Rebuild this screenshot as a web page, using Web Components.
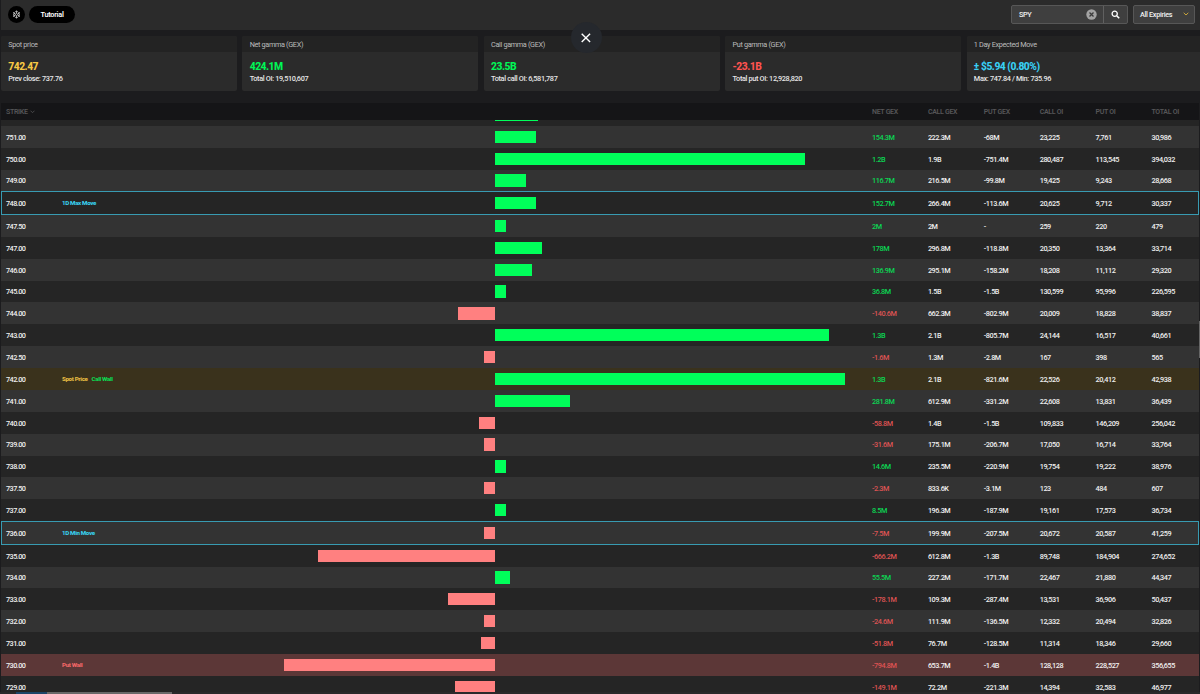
<!DOCTYPE html>
<html lang="en">
<head>
<meta charset="UTF-8">
<meta name="viewport" content="width=device-width, initial-scale=1.0">
<title>Gamma exposure</title>
<style>
    body { margin: 0; width: 1200px; height: 694px; overflow: hidden; background: #1c1c1e; color: #f0f0f0; font: 500 7.3px Roboto, "Liberation Sans", sans-serif; letter-spacing: -0.43px; }
</style>
</head>
<body>
<gex-app></gex-app>

<template id="app-template">
    <style>
        :host { display: flex; flex-direction: column; width: 1200px; height: 694px; overflow: hidden; position: relative; }
        .cards { display: flex; gap: 5.6px; padding: 5.7px 0 0 1px; height: 55.3px; width: 1201px; }
        stat-card { flex: none; width: 235.8px; }
        gex-table { margin-top: 12px; }
        .close { position: absolute; left: 570.5px; top: 22px; width: 31px; height: 31px; border-radius: 50%; background: #25282d; display: flex; align-items: center; justify-content: center; }
        .foot { position: absolute; left: 0; right: 0; bottom: 0; height: 2px; display: flex; background: #29292a; }
        .foot i { height: 2px; }
        .thumb { position: absolute; right: 0; top: 321px; width: 1.3px; height: 37px; background: #666; }
    </style>
    <top-bar></top-bar>
    <div class="cards">
        <stat-card label="Spot price" color="#f6c744">742.47<span slot="note">Prev close: 737.76</span></stat-card>
        <stat-card label="Net gamma (GEX)" color="#00f556">424.1M<span slot="note">Total OI: 19,510,607</span></stat-card>
        <stat-card label="Call gamma (GEX)" color="#00f556">23.5B<span slot="note">Total call OI: 6,581,787</span></stat-card>
        <stat-card label="Put gamma (GEX)" color="#ff5350">-23.1B<span slot="note">Total put OI: 12,928,820</span></stat-card>
        <stat-card label="1 Day Expected Move" color="#38d0f5">± $5.94 (0.80%)<span slot="note">Max: 747.84 / Min: 735.96</span></stat-card>
    </div>
    <gex-table></gex-table>
    <div class="close"><svg width="10" height="10" viewBox="0 0 10 10"><path d="M.7.7l8.400 8.400M9.100.7L.7 9.100" stroke="#fff" stroke-width="1.4"/></svg></div>
    <div class="foot"><i style="width:16px"></i><i style="width:31px;background:#1c4568"></i><i style="width:125px;background:#686868"></i></div>
    <div class="thumb"></div>
</template>

<template id="bar-template">
    <style>
        :host { display: flex; align-items: center; box-sizing: border-box; width: 1199px; height: 30px; margin-left: 1px; padding: 0 5px 1.5px 7px; background: #2b2b2b; flex: none; }
        .round { width: 17px; height: 17px; border-radius: 50%; background: #000; display: flex; align-items: center; justify-content: center; }
        .pill { width: 46px; height: 17px; margin-left: 4px; border-radius: 9px; background: #000; color: #fff; font-weight: 600; letter-spacing: -.25px; line-height: 18px; text-align: center; }
        .search { display: flex; margin-left: auto; width: 117px; height: 19.5px; box-sizing: border-box; border: 1px solid #575757; border-radius: 2px; background: #3f3f3f; align-items: center; }
        .search span { flex: 1; padding-left: 7.5px; }
        .search button { all: unset; display: flex; align-items: center; justify-content: center; width: 23px; height: 100%; border-left: 1px solid #606060; margin-left: 6px; }
        .select { display: flex; align-items: center; justify-content: space-between; margin-left: 5.5px; width: 62px; height: 19.5px; box-sizing: border-box; padding: 0 5px 0 6px; border: 1px solid #575757; border-radius: 2px; background: #3f3f3f; letter-spacing: -.33px; }
    </style>
    <div class="round"><svg width="9" height="9" viewBox="0 0 18 18" fill="none" stroke="#ddd" stroke-width="1.4"><circle cx="9" cy="9" r="2"/><path d="M9 1v5M9 12v5M2 5l4.5 2.5M11.5 10.5L16 13M2 13l4.5-2.5M11.5 7.5L16 5M6.5 2L9 4.5 11.500 2M6.500 16L9 13.500 11.500 16M2 8.500L5 8 4 4M16 8.500L13 8l1-4M2 10l3 .5L4 14M16 10l-3 .5 1 3.500"/></svg></div>
    <div class="pill">Tutorial</div>
    <div class="search"><span>SPY</span>
        <svg width="11" height="11" viewBox="0 0 11 11"><circle cx="5.500" cy="5.500" r="5.200" fill="#a3a3a3"/><path d="M3.500 3.500l4 4M7.500 3.500l-4 4" stroke="#3c3c3c" stroke-width="1.300"/></svg>
        <button><svg width="9" height="9" viewBox="0 0 9 9" fill="none" stroke="#fff"><circle cx="3.700" cy="3.700" r="2.600" stroke-width="1.300"/><path d="M5.700 5.700l2.500 2.500" stroke-width="1.600"/></svg></button>
    </div>
    <div class="select"><span>All Expiries</span><svg width="6" height="4" viewBox="0 0 6 4"><path d="M.7.8l2.300 2.200L5.300.8" fill="none" stroke="#c9a53c" stroke-width="1"/></svg></div>
</template>

<template id="card-template">
    <style>
        :host { display: flex; flex-direction: column; height: 55.300px; border-radius: 2px; overflow: hidden; background: #2b2b2b; }
        .label { height: 16.300px; line-height: 17.400px; padding-left: 7.300px; background: #232323; color: #bcbcbc; font-weight: 400; letter-spacing: -.35px; flex: none; }
        .value { padding: 8px 0 0 7.300px; font-size: 10.300px; font-weight: 800; line-height: 13px; letter-spacing: -.5px; color: var(--value); }
        .note { padding-left: 7.300px; line-height: 11.500px; letter-spacing: -.34px; color: #e6e6e6; }
    </style>
    <div class="label"></div>
    <div class="value"><slot></slot></div>
    <div class="note"><slot name="note"></slot></div>
</template>

<template id="table-template">
    <style>
        :host { display: flex; flex-direction: column; width: 1198px; margin-left: 1px; flex: none; }
        .head { display: grid; grid-template-columns: 56px 83px 700px 27px repeat(5, 55.900px) 1fr; padding: 1.500px 0 0 5px; align-items: center; box-sizing: border-box; height: 17px; background: #151517; color: #555557; font-weight: 600; font-size: 7px; letter-spacing: -.3px; }
        .head svg { margin-left: 1px; }
        .sliver { height: 5.900px; background: #252525; padding-left: 494px; }
        .sliver i { display: block; width: 42.500px; height: 1.300px; background: #00ff5a; }
    </style>
    <div class="head"><span>STRIKE <svg width="5" height="4" viewBox="0 0 5 4"><path d="M.5.7l2 2 2-2" fill="none" stroke="#555557" stroke-width=".8"/></svg></span><span></span><span></span><span></span><span>NET GEX</span><span>CALL GEX</span><span>PUT GEX</span><span>CALL OI</span><span>PUT OI</span><span>TOTAL OI</span></div>
    <div class="sliver"><i></i></div>
    <div class="rows"></div>
</template>

<template id="row-template">
    <style>
        :host { display: grid; grid-template-columns: 56px 83px 700px 27px repeat(5, 55.900px) 1fr; align-items: center; box-sizing: border-box; height: 21.860px; padding-left: 5px; background: #252525; }
        :host([light]) { background: #333; }
        :host([mark=move]) { height: 23.600px; border: 1px solid #389bb2; padding-left: 4px; }
        :host([mark=spot]) { background: #3a321c; }
        :host([mark=put]) { background: #5c3737; }
        span { padding-top: .8px; }
        .strike { letter-spacing: -.55px; }
        .tags { display: flex; gap: 4px; font-size: 6.200px; font-weight: 800; letter-spacing: -.35px; }
        .tags span { padding: 0; }
        .chart { display: flex; height: 12.200px; }
        .chart i { display: block; background: #00ff5a; margin-left: 350px; }
        .chart i.neg { background: #ff8080; }
        .net { color: #0bd653; }
        .net.neg { color: #df5353; }
    </style>
    <span class="strike"></span>
    <div class="tags"></div>
    <div class="chart"><i></i></div>
    <span></span>
    <span class="net"></span>
</template>

<script>
    // strike, bar width (negative grows to the left), net gex, call gex, put gex, call oi, put oi, total oi
    const rows = [
        ['751.00', 41, '154.3M', '222.3M', '-68M', '23,225', '7,761', '30,986'],
        ['750.00', 309.5, '1.2B', '1.9B', '-751.4M', '280,487', '113,545', '394,032'],
        ['749.00', 30.5, '116.7M', '216.5M', '-99.8M', '19,425', '9,243', '28,668'],
        ['748.00', 40.5, '152.7M', '266.4M', '-113.6M', '20,625', '9,712', '30,337'],
        ['747.50', 10.5, '2M', '2M', '-', '259', '220', '479'],
        ['747.00', 47, '178M', '296.8M', '-118.8M', '20,350', '13,364', '33,714'],
        ['746.00', 36.5, '136.9M', '295.1M', '-158.2M', '18,208', '11,112', '29,320'],
        ['745.00', 10.5, '36.8M', '1.5B', '-1.5B', '130,599', '95,996', '226,595'],
        ['744.00', -37.5, '-140.6M', '662.3M', '-802.9M', '20,009', '18,828', '38,837'],
        ['743.00', 334, '1.3B', '2.1B', '-805.7M', '24,144', '16,517', '40,661'],
        ['742.50', -11, '-1.6M', '1.3M', '-2.8M', '167', '398', '565'],
        ['742.00', 350, '1.3B', '2.1B', '-821.6M', '22,526', '20,412', '42,938'],
        ['741.00', 75, '281.8M', '612.9M', '-331.2M', '22,608', '13,831', '36,439'],
        ['740.00', -16, '-58.8M', '1.4B', '-1.5B', '109,833', '146,209', '256,042'],
        ['739.00', -11, '-31.6M', '175.1M', '-206.7M', '17,050', '16,714', '33,764'],
        ['738.00', 10.5, '14.6M', '235.5M', '-220.9M', '19,754', '19,222', '38,976'],
        ['737.50', -11, '-2.3M', '833.6K', '-3.1M', '123', '484', '607'],
        ['737.00', 10.5, '8.5M', '196.3M', '-187.9M', '19,161', '17,573', '36,734'],
        ['736.00', -11, '-7.5M', '199.9M', '-207.5M', '20,672', '20,587', '41,259'],
        ['735.00', -177.5, '-666.2M', '612.8M', '-1.3B', '89,748', '184,904', '274,652'],
        ['734.00', 14.5, '55.5M', '227.2M', '-171.7M', '22,467', '21,880', '44,347'],
        ['733.00', -47, '-178.1M', '109.3M', '-287.4M', '13,531', '36,906', '50,437'],
        ['732.00', -11, '-24.6M', '111.9M', '-136.5M', '12,332', '20,494', '32,826'],
        ['731.00', -14, '-51.8M', '76.7M', '-128.5M', '11,314', '18,346', '29,660'],
        ['730.00', -211, '-794.8M', '653.7M', '-1.4B', '128,128', '228,527', '356,655'],
        ['729.00', -40, '-149.1M', '72.2M', '-221.3M', '14,394', '32,583', '46,977']
    ];
    const marks = {
        '748.00': ['move', [['1D Max Move', '#38cfee']]],
        '742.00': ['spot', [['Spot Price', '#e7bd43'], ['Call Wall', '#0bdc52']]],
        '736.00': ['move', [['1D Min Move', '#38cfee']]],
        '730.00': ['put', [['Put Wall', '#f36767']]]
    };

    class BaseElement extends HTMLElement {
        fill(id) {
            this.attachShadow({ mode: 'open' });
            this.shadowRoot.append(document.querySelector(id).content.cloneNode(true));
            return this.shadowRoot;
        }
    }

    class TopBar extends BaseElement {
        connectedCallback() { this.fill('#bar-template'); }
    }

    class StatCard extends BaseElement {
        connectedCallback() {
            const root = this.fill('#card-template');
            root.querySelector('.label').textContent = this.getAttribute('label');
            this.style.setProperty('--value', this.getAttribute('color'));
        }
    }

    class GexRow extends BaseElement {
        connectedCallback() {
            const root = this.fill('#row-template');
            const [strike, width, net, ...rest] = this.data;
            root.querySelector('.strike').textContent = strike;
            const bar = root.querySelector('i');
            bar.style.width = Math.abs(width) + 'px';
            if (width < 0) {
                bar.className = 'neg';
                bar.style.marginLeft = 350 + width + 'px';
            }
            const netCell = root.querySelector('.net');
            netCell.textContent = net;
            netCell.classList.toggle('neg', width < 0);
            for (const value of rest) {
                const cell = document.createElement('span');
                cell.textContent = value;
                root.append(cell);
            }
            if (marks[strike]) {
                const [mark, tags] = marks[strike];
                this.setAttribute('mark', mark);
                for (const [text, color] of tags) {
                    const tag = document.createElement('span');
                    tag.textContent = text;
                    tag.style.color = color;
                    root.querySelector('.tags').append(tag);
                }
            }
        }
    }

    class GexTable extends BaseElement {
        connectedCallback() {
            const body = this.fill('#table-template').querySelector('.rows');
            rows.forEach((data, i) => {
                const row = document.createElement('gex-row');
                row.data = data;
                if (i % 2 === 0) row.setAttribute('light', '');
                body.append(row);
            });
        }
    }

    class GexApp extends BaseElement {
        connectedCallback() { this.fill('#app-template'); }
    }

    customElements.define('top-bar', TopBar);
    customElements.define('stat-card', StatCard);
    customElements.define('gex-row', GexRow);
    customElements.define('gex-table', GexTable);
    customElements.define('gex-app', GexApp);
</script>
</body>
</html>
